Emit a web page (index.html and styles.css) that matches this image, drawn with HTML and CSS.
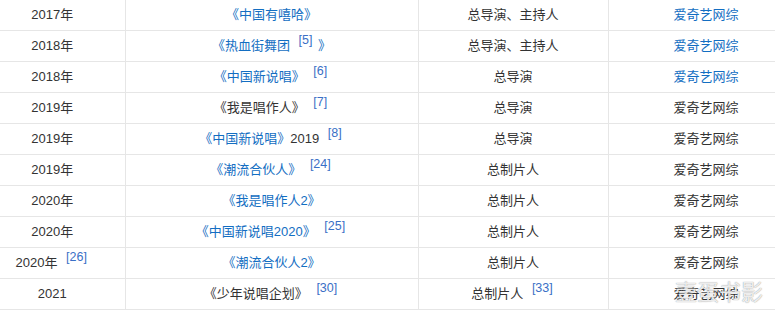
FILE: index.html
```html
<!DOCTYPE html>
<html lang="zh-CN">
<head>
  <meta charset="UTF-8">
  <title>作品列表</title>
  <link rel="stylesheet" href="styles.css">
</head>
<body>
  <div class="wrap">
    <table class="works">
      <colgroup>
        <col class="c-year">
        <col class="c-name">
        <col class="c-role">
        <col class="c-platform">
      </colgroup>
      <tbody>
        <tr>
          <td>2017年</td>
          <td><a class="link">《中国有嘻哈》</a></td>
          <td>总导演、主持人</td>
          <td><a class="link">爱奇艺网综</a></td>
        </tr>
        <tr>
          <td>2018年</td>
          <td><a class="link">《热血街舞团 <sup class="ref">[5]</sup> 》</a></td>
          <td>总导演、主持人</td>
          <td><a class="link">爱奇艺网综</a></td>
        </tr>
        <tr>
          <td>2018年</td>
          <td><a class="link">《中国新说唱》</a> <sup class="ref">[6]</sup></td>
          <td>总导演</td>
          <td><a class="link">爱奇艺网综</a></td>
        </tr>
        <tr>
          <td>2019年</td>
          <td>《我是唱作人》 <sup class="ref">[7]</sup></td>
          <td>总导演</td>
          <td>爱奇艺网综</td>
        </tr>
        <tr>
          <td>2019年</td>
          <td><a class="link">《中国新说唱》</a>2019 <sup class="ref">[8]</sup></td>
          <td>总导演</td>
          <td>爱奇艺网综</td>
        </tr>
        <tr>
          <td>2019年</td>
          <td><a class="link">《潮流合伙人》</a> <sup class="ref">[24]</sup></td>
          <td>总制片人</td>
          <td>爱奇艺网综</td>
        </tr>
        <tr>
          <td>2020年</td>
          <td><a class="link">《我是唱作人2》</a></td>
          <td>总制片人</td>
          <td>爱奇艺网综</td>
        </tr>
        <tr>
          <td>2020年</td>
          <td><a class="link">《中国新说唱2020》</a> <sup class="ref">[25]</sup></td>
          <td>总制片人</td>
          <td>爱奇艺网综</td>
        </tr>
        <tr>
          <td>2020年 <sup class="ref">[26]</sup></td>
          <td><a class="link">《潮流合伙人2》</a></td>
          <td>总制片人</td>
          <td>爱奇艺网综</td>
        </tr>
        <tr>
          <td>2021</td>
          <td>《少年说唱企划》 <sup class="ref">[30]</sup></td>
          <td>总制片人 <sup class="ref">[33]</sup></td>
          <td>爱奇艺网综</td>
        </tr>
      </tbody>
    </table>
    <div class="watermark">壹蛋书影</div>
  </div>
</body>
</html>
```

FILE: styles.css
```css
body {
  margin: 0;
  background: #ffffff;
  font-family: "Liberation Sans", "Noto Sans CJK SC", sans-serif;
  font-size: 13px;
  color: #333;
  overflow: hidden;
}

.wrap {
  position: relative;
  width: 775px;
  height: 311px;
  overflow: hidden;
}

.works {
  border-collapse: collapse;
  table-layout: fixed;
  width: 824px;
  margin-left: -20px;
}

.c-year { width: 145px; }
.c-name { width: 293px; }
.c-role { width: 190px; }
.c-platform { width: 196px; }

.works td {
  height: 30px;
  padding: 0;
  line-height: 30px;
  text-align: center;
  white-space: nowrap;
  border-right: 1px solid #e6e6e6;
  border-bottom: 1px solid #e6e6e6;
}

.link {
  color: #136ec2;
  text-decoration: none;
}

.ref {
  font-size: 12.5px;
  line-height: 1;
  vertical-align: 6px;
  color: #3a6fc6;
  margin: 0 2px 0 5px;
}

.watermark {
  position: absolute;
  left: 675px;
  top: 274px;
  font-size: 22px;
  color: rgba(255, 255, 255, 0.85);
  text-shadow: 0 0 1px rgba(90, 90, 90, 0.8);
}
```
